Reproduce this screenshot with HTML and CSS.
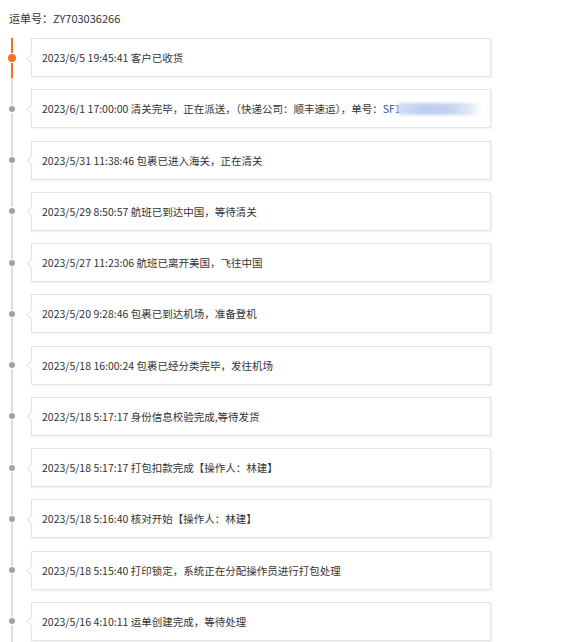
FILE: index.html
```html
<!DOCTYPE html>
<html lang="zh-CN">
<head>
<meta charset="utf-8">
<title>运单跟踪</title>
<link rel="stylesheet" href="styles.css">
</head>
<body>
<div class="page">
  <div class="title">运单号：ZY703036266</div>
  <ul class="timeline">
    <li class="item first">
      <div class="rail"><span class="dot"></span></div>
      <div class="card">2023/6/5 19:45:41 客户已收货</div>
    </li>
    <li class="item">
      <div class="rail"><span class="dot"></span></div>
      <div class="card">2023/6/1 17:00:00 清关完毕，正在派送，（快递公司：顺丰速运），单号：<span class="no">SF1</span><span class="blur"></span></div>
    </li>
    <li class="item">
      <div class="rail"><span class="dot"></span></div>
      <div class="card">2023/5/31 11:38:46 包裹已进入海关，正在清关</div>
    </li>
    <li class="item">
      <div class="rail"><span class="dot"></span></div>
      <div class="card">2023/5/29 8:50:57 航班已到达中国，等待清关</div>
    </li>
    <li class="item">
      <div class="rail"><span class="dot"></span></div>
      <div class="card">2023/5/27 11:23:06 航班已离开美国，飞往中国</div>
    </li>
    <li class="item">
      <div class="rail"><span class="dot"></span></div>
      <div class="card">2023/5/20 9:28:46 包裹已到达机场，准备登机</div>
    </li>
    <li class="item">
      <div class="rail"><span class="dot"></span></div>
      <div class="card">2023/5/18 16:00:24 包裹已经分类完毕，发往机场</div>
    </li>
    <li class="item">
      <div class="rail"><span class="dot"></span></div>
      <div class="card">2023/5/18 5:17:17 身份信息校验完成,等待发货</div>
    </li>
    <li class="item">
      <div class="rail"><span class="dot"></span></div>
      <div class="card">2023/5/18 5:17:17 打包扣款完成【操作人：林建】</div>
    </li>
    <li class="item">
      <div class="rail"><span class="dot"></span></div>
      <div class="card">2023/5/18 5:16:40 核对开始【操作人：林建】</div>
    </li>
    <li class="item">
      <div class="rail"><span class="dot"></span></div>
      <div class="card">2023/5/18 5:15:40 打印锁定，系统正在分配操作员进行打包处理</div>
    </li>
    <li class="item">
      <div class="rail"><span class="dot"></span></div>
      <div class="card">2023/5/16 4:10:11 运单创建完成，等待处理</div>
    </li>
  </ul>
</div>
</body>
</html>
```

FILE: styles.css
```css
html, body {
  margin: 0;
  padding: 0;
  background: #fff;
}
body {
  font-family: "Noto Sans CJK SC", "Microsoft YaHei", sans-serif;
  color: #333;
}
.page {
  padding: 8px 0 0 0;
}
.title {
  padding-left: 9px;
  font-size: 11px;
  line-height: 20px;
  height: 20px;
  color: #333;
}
.timeline {
  list-style: none;
  margin: 10px 0 0 0;
  padding: 0;
}
.item {
  display: grid;
  grid-template-columns: 31px 460px;
  grid-template-rows: 39px;
  padding-bottom: 12.27px;
  background: linear-gradient(#dcdcdc, #dcdcdc) 11px 0 / 2px 100% no-repeat;
}
.item.first {
  background:
    linear-gradient(#f4721f, #f4721f) 11px 0 / 2px 40px no-repeat,
    linear-gradient(#dcdcdc, #dcdcdc) 11px 0 / 2px 100% no-repeat;
}
.rail {
  display: flex;
  align-items: center;
}
.dot {
  display: block;
  width: 6px;
  height: 6px;
  margin-left: 9px;
  border-radius: 50%;
  background: #a3a3a3;
  box-shadow: 0 0 0 1px #fff;
}
.first .dot {
  width: 8px;
  height: 8px;
  margin-left: 8px;
  background: #f4721f;
}
.card {
  position: relative;
  box-sizing: border-box;
  height: 39px;
  border: 1px solid #e3e3e3;
  box-shadow: 1px 1px 2px rgba(0, 0, 0, 0.06);
  background: #fff;
  padding-left: 10px;
  display: flex;
  align-items: center;
  font-size: 10.5px;
  white-space: nowrap;
  color: #333;
}
.card::before {
  content: "";
  position: absolute;
  left: -4px;
  top: 50%;
  width: 6px;
  height: 6px;
  margin-top: -3px;
  background: #fff;
  border-left: 1px solid #e3e3e3;
  border-bottom: 1px solid #e3e3e3;
  transform: rotate(45deg);
}
.no {
  color: #1f55a5;
}
.blur {
  display: inline-block;
  width: 84px;
  height: 12px;
  margin-left: -3px;
  background: linear-gradient(90deg, #d3def3 0%, #bccdee 30%, #c3d2ef 60%, #dfe7f6 85%, rgba(255,255,255,0) 100%);
  filter: blur(1.5px);
}
```
